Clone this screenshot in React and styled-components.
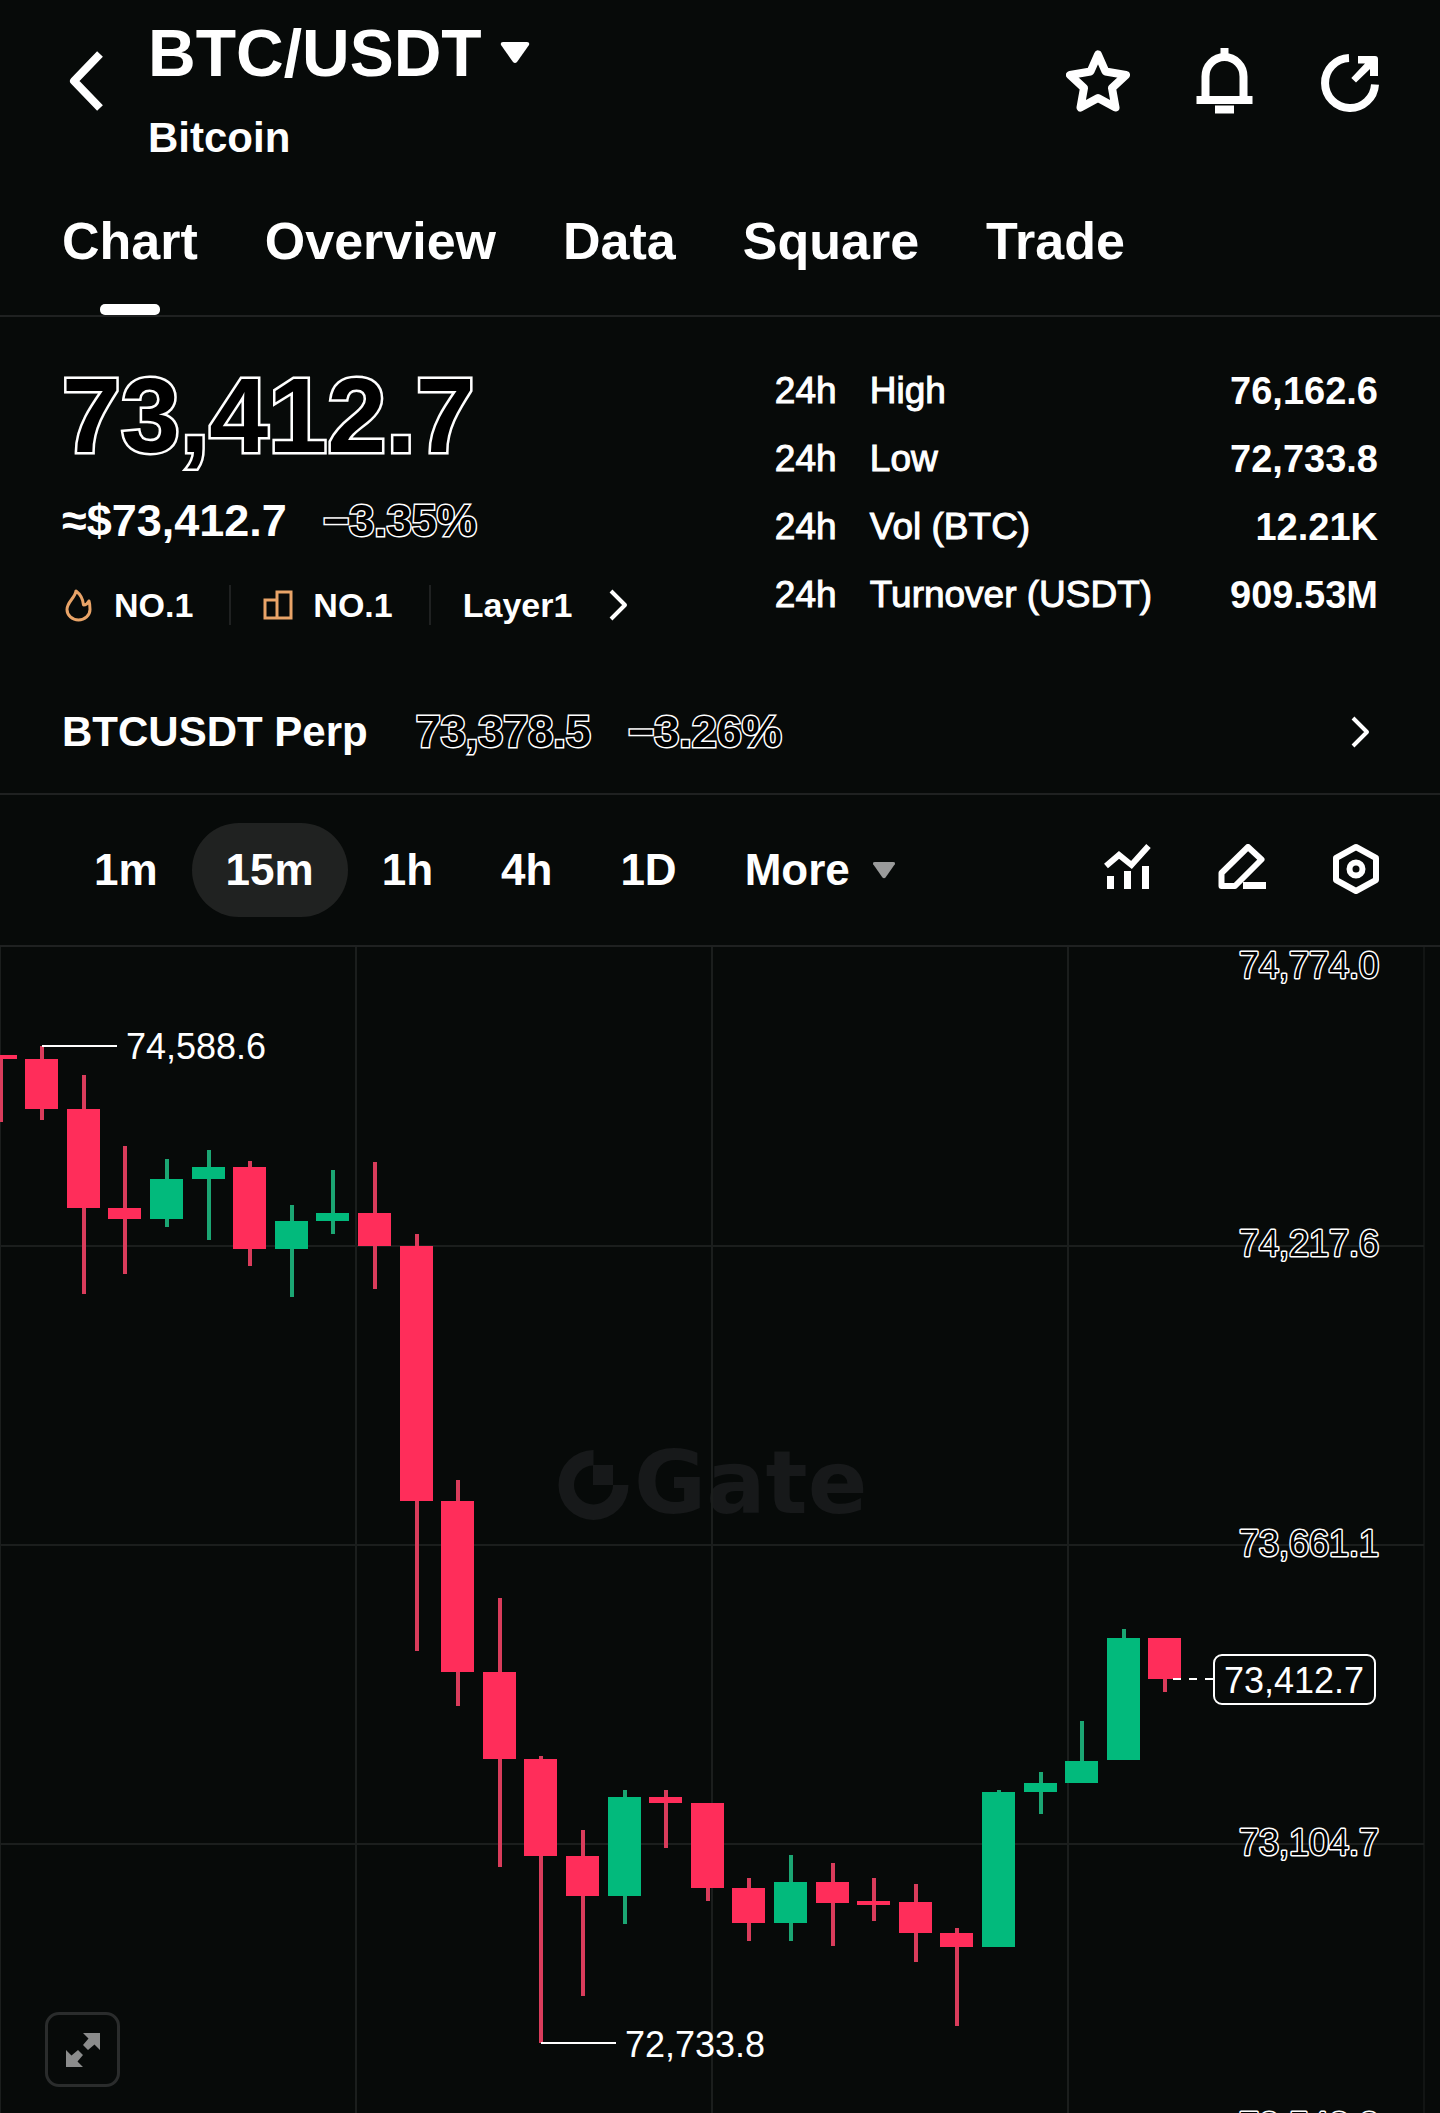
import React, { useState } from 'react';
import styled, { createGlobalStyle, css, ThemeProvider } from 'styled-components';

const theme = {
  colors: {
    background: '#070a09',
    text: '#ffffff',
    border: '#1f2121',
    grid: '#1b1e1d',
    gridEdge: '#121514',
    pill: '#202221',
    muted: '#9a9b9b',
    accent: '#e9a468',
    watermark: '#17191a',
    up: '#02ba7c',
    upWick: '#1ba673',
    down: '#ff2d5a',
    downWick: '#d93c5b',
  },
};

const GlobalStyle = createGlobalStyle`
  * {
    box-sizing: border-box;
  }

  body {
    margin: 0;
    background-color: ${theme.colors.background};
    color: ${theme.colors.text};
    font-family: 'Liberation Sans', Arial, sans-serif;
  }

  button {
    padding: 0;
    border: 0;
    background: none;
    color: inherit;
    font: inherit;
    cursor: pointer;
  }

  svg {
    display: block;
  }
`;

const outlined = css`
  color: #000;
  -webkit-text-stroke: 3px ${({ theme }) => theme.colors.text};
  paint-order: stroke fill;
`;

const Page = styled.main`
  overflow: hidden;
`;

/* Header */

const HeaderBar = styled.header`
  display: flex;
  align-items: center;
  padding: 0 58px 0 68px;
`;

const TitleBlock = styled.div`
  flex: 1;
  margin-left: 44px;
  padding-top: 16px;
`;

const PairButton = styled.button`
  display: flex;
  align-items: center;
  gap: 18px;
  font-size: 66px;
  font-weight: 700;
  line-height: 74px;
`;

const PairName = styled.h1`
  margin: 0;
  font: inherit;
`;

const CoinName = styled.p`
  margin: 24px 0 0;
  font-size: 42px;
  font-weight: 700;
  line-height: 48px;
`;

const IconGroup = styled.div`
  display: flex;
  align-items: center;
  gap: 62px;
`;

const TabBar = styled.nav`
  display: flex;
  gap: 67px;
  padding: 49px 62px 0;
  border-bottom: 2px solid ${({ theme }) => theme.colors.border};
`;

const TabButton = styled.button`
  display: flex;
  flex-direction: column;
  align-items: center;
  gap: 33px;
  font-size: 52px;
  font-weight: 700;
  line-height: 60px;

  &::after {
    content: '';
    width: 60px;
    height: 11px;
    border-radius: 5px;
    background-color: ${({ $active, theme }) => ($active ? theme.colors.text : 'transparent')};
  }
`;

/* Price summary */

const Summary = styled.section`
  display: grid;
  grid-template-columns: 13fr 11fr;
  padding: 40px 62px 42px;
`;

const PriceColumn = styled.div`
  padding-top: 6px;
`;

const LastPrice = styled.div`
  ${outlined}
  -webkit-text-stroke-width: 5px;
  font-size: 106px;
  font-weight: 700;
  line-height: 104px;
`;

const FiatRow = styled.div`
  display: flex;
  gap: 36px;
  margin-top: 28px;
  font-size: 45px;
  font-weight: 700;
  line-height: 52px;
`;

const Outlined = styled.span`
  ${outlined}
`;

const TagRow = styled.div`
  display: flex;
  align-items: center;
  margin-top: 38px;
  font-size: 34px;
  font-weight: 700;
  line-height: 40px;
`;

const Tag = styled.a`
  display: flex;
  align-items: center;
  gap: ${({ $gap }) => $gap || 20}px;
  color: inherit;
  text-decoration: none;

  & + & {
    margin-left: 36px;
    padding-left: 32px;
    border-left: 2px solid ${({ theme }) => theme.colors.border};
  }
`;

const Stats = styled.table`
  width: 100%;
  border-collapse: collapse;
  font-size: 37px;

  th,
  td {
    height: 68px;
    padding: 0;
    font-weight: 400;
    text-align: left;
    white-space: nowrap;
    -webkit-text-stroke: 1px ${({ theme }) => theme.colors.text};
  }

  td:first-child {
    width: 95px;
  }

  td:last-child {
    font-size: 38px;
    font-weight: 700;
    text-align: right;
    -webkit-text-stroke: 0;
  }
`;

const PerpLink = styled.a`
  display: flex;
  align-items: center;
  height: 124px;
  padding: 0 70px 0 62px;
  border-bottom: 2px solid ${({ theme }) => theme.colors.border};
  color: inherit;
  font-size: 45px;
  font-weight: 700;
  text-decoration: none;

  svg {
    margin-left: auto;
  }
`;

const PerpName = styled.span`
  margin-right: 48px;
  font-size: 42px;
`;

const PerpPrice = styled(Outlined)`
  margin-right: 37px;
`;

/* Toolbar */

const Toolbar = styled.div`
  display: flex;
  align-items: center;
  justify-content: space-between;
  height: 152px;
  padding: 0 58px 0 60px;
  border-bottom: 2px solid ${({ theme }) => theme.colors.border};
`;

const Intervals = styled.div`
  display: flex;
`;

const IntervalButton = styled.button`
  display: flex;
  align-items: center;
  gap: 22px;
  height: 94px;
  padding: 0 34px;
  border-radius: 47px;
  background-color: ${({ $active, theme }) => ($active ? theme.colors.pill : 'transparent')};
  font-size: 44px;
  font-weight: 700;
`;

/* Chart */

const ChartPanel = styled.section`
  position: relative;
`;

const ChartSvg = styled.svg`
  width: 100%;
  height: auto;
  overflow: visible;
  font-size: 36px;
`;

const GridLine = styled.line`
  stroke: ${({ $edge, theme }) => ($edge ? theme.colors.gridEdge : theme.colors.grid)};
  stroke-width: 2;
`;

const Watermark = styled.g`
  fill: ${({ theme }) => theme.colors.watermark};
  font-family: 'DejaVu Sans', sans-serif;
  font-size: 88px;
  font-weight: 700;
`;

const Wick = styled.line`
  stroke: ${({ $up, theme }) => ($up ? theme.colors.upWick : theme.colors.downWick)};
  stroke-width: 4;
`;

const Body = styled.rect`
  fill: ${({ $up, theme }) => ($up ? theme.colors.up : theme.colors.down)};
`;

const AxisLabel = styled.text`
  fill: #000;
  stroke: ${({ theme }) => theme.colors.text};
  stroke-width: 3;
  stroke-linejoin: round;
  paint-order: stroke fill;
`;

const Marker = styled.g`
  fill: ${({ theme }) => theme.colors.text};

  line,
  rect {
    fill: ${({ theme }) => theme.colors.background};
    stroke: ${({ theme }) => theme.colors.text};
    stroke-width: 2;
  }
`;

const ExpandButton = styled.button`
  position: absolute;
  left: 45px;
  bottom: 26px;
  display: grid;
  place-items: center;
  width: 75px;
  height: 75px;
  border: 3px solid #2a2c2c;
  border-radius: 14px;
  background-color: ${({ theme }) => theme.colors.background};
  color: #8b8c8c;
`;

const BackIcon = () => (
  <svg width="36" height="64" viewBox="0 0 36 64" fill="none" stroke="currentColor" strokeWidth="8" strokeLinejoin="round">
    <path d="M32 5L6 32L32 59" />
  </svg>
);

const CaretIcon = ({ width = 30, height = 22, color = 'currentColor' }) => (
  <svg width={width} height={height} viewBox="0 0 30 22" fill={color}>
    <path d="M3 0H27Q30 0 29 3L17 20Q15 22 13 20L1 3Q0 0 3 0Z" />
  </svg>
);

const ChevronIcon = () => (
  <svg width="20" height="32" viewBox="0 0 20 32" fill="none" stroke="currentColor" strokeWidth="4" strokeLinejoin="round">
    <path d="M3 2L17 16L3 30" />
  </svg>
);

const StarIcon = () => (
  <svg width="64" height="64" viewBox="0 0 64 64" fill="none" stroke="currentColor" strokeWidth="8" strokeLinejoin="round">
    <path d="M32 5.5L39.5 22.5L60 26L46 39L49.5 58.5L32 49L14.5 58.5L18 39L4 26L24.5 22.5Z" />
  </svg>
);

const BellIcon = () => (
  <svg width="64" height="66" viewBox="0 -1 64 66" fill="currentColor">
    <rect x="28.5" y="-1" width="8" height="8" />
    <path d="M13.5 50V27.5A19 19.5 0 0 1 51.5 27.5V50" fill="none" stroke="currentColor" strokeWidth="8" />
    <rect x="4.5" y="47" width="56" height="8" />
    <rect x="23" y="56.5" width="19" height="8" />
  </svg>
);

const ShareIcon = () => (
  <svg width="64" height="64" viewBox="0 0 64 64" fill="currentColor">
    <path d="M31 9A25 25 0 1 0 57 35.5" fill="none" stroke="currentColor" strokeWidth="8" />
    <path d="M40 7H57Q60 7 60 10V27H52V20L38 33.5L33.3 29L47 14.5H40Z" />
  </svg>
);

const FlameIcon = () => (
  <svg width="32" height="36" viewBox="0 0 32 36" fill="none" stroke={theme.colors.accent} strokeWidth="3" strokeLinejoin="round">
    <path d="M14 4C13 11 5 15 5 22.5A11.5 10.5 0 0 0 28 22.5C28 19 28 17 27 14C26 16 24 18 21.5 18C21 12 18 7 14 4Z" />
  </svg>
);

const PodiumIcon = () => (
  <svg width="30" height="30" viewBox="0 0 30 30" fill="none" stroke={theme.colors.accent} strokeWidth="3">
    <path d="M14 28H2V10H14M14 28V2H28V28Z" />
  </svg>
);

const IndicatorIcon = () => (
  <svg width="52" height="52" viewBox="0 0 52 52" fill="currentColor">
    <path d="M4 22L17 11L29.5 21L46.5 2" fill="none" stroke="currentColor" strokeWidth="6" />
    <rect x="5" y="32" width="7" height="13" />
    <rect x="22" y="27" width="7" height="18" />
    <rect x="40" y="22" width="7" height="23" />
  </svg>
);

const PencilIcon = () => (
  <svg width="52" height="52" viewBox="0 0 52 52" fill="none" stroke="currentColor" strokeWidth="6" strokeLinejoin="round">
    <path d="M5.5 42V29L32 3L45.5 15.5L19 42Z" />
    <path d="M27 41.5H50" strokeWidth="7" />
  </svg>
);

const SettingsIcon = () => (
  <svg width="52" height="52" viewBox="0 0 52 52" fill="none" stroke="currentColor" strokeWidth="6" strokeLinejoin="round">
    <path d="M26 3L46 14V36L26 47L6 36V14Z" />
    <circle cx="26" cy="25" r="6.5" />
  </svg>
);

const ExpandIcon = () => (
  <svg width="34" height="34" viewBox="0 0 34 34" fill="currentColor">
    <path d="M17 0H34V17L28.5 11.5L22 17L17 12L22.5 5.5Z" />
    <path d="M17 34H0V17L5.5 22.5L12 17L17 22L11.5 28.5Z" />
  </svg>
);

const tabs = ['Chart', 'Overview', 'Data', 'Square', 'Trade'];
const intervals = ['1m', '15m', '1h', '4h', '1D'];

const stats = [
  { label: 'High', value: '76,162.6' },
  { label: 'Low', value: '72,733.8' },
  { label: 'Vol (BTC)', value: '12.21K' },
  { label: 'Turnover (USDT)', value: '909.53M' },
];

const axis = [
  { label: '74,774.0', y: 31 },
  { label: '74,217.6', y: 309 },
  { label: '73,661.1', y: 609 },
  { label: '73,104.7', y: 908 },
  { label: '72,548.2', y: 1191 },
];

// [high, body top, body bottom, low, up] in chart units
const candles = [
  [108, 108, 112, 175, 0],
  [99, 112, 162, 173, 0],
  [128, 162, 261, 347, 0],
  [199, 261, 272, 327, 0],
  [212, 232, 272, 280, 1],
  [203, 220, 232, 293, 1],
  [214, 220, 302, 319, 0],
  [258, 274, 302, 350, 1],
  [223, 266, 274, 287, 1],
  [215, 266, 299, 342, 0],
  [287, 299, 554, 704, 0],
  [533, 554, 725, 759, 0],
  [651, 725, 812, 920, 0],
  [809, 812, 909, 1096, 0],
  [883, 909, 949, 1049, 0],
  [843, 850, 949, 977, 1],
  [843, 850, 856, 901, 0],
  [856, 856, 941, 954, 0],
  [931, 941, 976, 994, 0],
  [908, 935, 976, 994, 1],
  [916, 935, 956, 999, 0],
  [931, 954, 958, 974, 0],
  [937, 955, 986, 1015, 0],
  [981, 986, 1000, 1079, 0],
  [843, 845, 1000, 1000, 1],
  [825, 836, 845, 867, 1],
  [774, 814, 836, 836, 1],
  [682, 691, 813, 813, 1],
  [691, 691, 732, 745, 0],
];

const CANDLE_STEP = 41.6;
const CANDLE_WIDTH = 33;

const Header = () => (
  <HeaderBar>
    <button aria-label="Back"><BackIcon /></button>
    <TitleBlock>
      <PairButton>
        <PairName>BTC/USDT</PairName>
        <CaretIcon />
      </PairButton>
      <CoinName>Bitcoin</CoinName>
    </TitleBlock>
    <IconGroup>
      <button aria-label="Add to favorites"><StarIcon /></button>
      <button aria-label="Price alerts"><BellIcon /></button>
      <button aria-label="Share"><ShareIcon /></button>
    </IconGroup>
  </HeaderBar>
);

const PriceSummary = () => (
  <Summary>
    <PriceColumn>
      <LastPrice>73,412.7</LastPrice>
      <FiatRow>
        <span>≈$73,412.7</span>
        <Outlined>−3.35%</Outlined>
      </FiatRow>
      <TagRow>
        <Tag href="#hot"><FlameIcon />NO.1</Tag>
        <Tag href="#rank"><PodiumIcon />NO.1</Tag>
        <Tag href="#layer1" $gap={36}>Layer1<ChevronIcon /></Tag>
      </TagRow>
    </PriceColumn>
    <Stats>
      <tbody>
        {stats.map(({ label, value }) => (
          <tr key={label}>
            <td>24h</td>
            <th scope="row">{label}</th>
            <td>{value}</td>
          </tr>
        ))}
      </tbody>
    </Stats>
  </Summary>
);

const CandleChart = () => (
  <ChartPanel>
    <ChartSvg viewBox="0 0 1440 1166" role="img" aria-label="BTC/USDT candlestick chart">
      <Watermark>
        <path d="M593.5 503A35 35 0 1 0 628.5 538H613A19.5 19.5 0 1 1 593.5 518.5Z" />
        <rect x="593" y="518" width="20" height="20" />
        <text x="634" y="566">Gate</text>
      </Watermark>
      {[0, 356, 712, 1068, 1424].map((x) => (
        <GridLine key={x} $edge={x === 1424} x1={x} x2={x} y1="0" y2="1166" />
      ))}
      {[299, 598, 897].map((y) => (
        <GridLine key={y} x1="0" x2="1424" y1={y} y2={y} />
      ))}
      {candles.map(([high, top, bottom, low, up], i) => {
        const x = Math.round(i * CANDLE_STEP + 0.5);
        return (
          <g key={i}>
            <Wick $up={up} x1={x} x2={x} y1={high} y2={low} />
            <Body $up={up} x={x - 17} y={top} width={CANDLE_WIDTH} height={bottom - top} />
          </g>
        );
      })}
      <Marker>
        <line x1="42" x2="117" y1="99" y2="99" />
        <text x="126" y="112">74,588.6</text>
      </Marker>
      <Marker>
        <line x1="541" x2="616" y1="1096" y2="1096" />
        <text x="625" y="1110">72,733.8</text>
      </Marker>
      {axis.map(({ label, y }) => (
        <AxisLabel key={label} x="1239" y={y}>{label}</AxisLabel>
      ))}
      <Marker>
        <line x1="1173" x2="1213" y1="732" y2="732" strokeDasharray="8 8" />
        <rect x="1214" y="708" width="161" height="49" rx="8" />
        <text x="1224" y="746">73,412.7</text>
      </Marker>
    </ChartSvg>
    <ExpandButton aria-label="Full screen"><ExpandIcon /></ExpandButton>
  </ChartPanel>
);

const App = () => {
  const [tab, setTab] = useState('Chart');
  const [interval, setInterval] = useState('15m');

  return (
    <ThemeProvider theme={theme}>
      <GlobalStyle />
      <Page>
        <Header />
        <TabBar>
          {tabs.map((name) => (
            <TabButton key={name} $active={name === tab} onClick={() => setTab(name)}>
              {name}
            </TabButton>
          ))}
        </TabBar>
        <PriceSummary />
        <PerpLink href="#perp">
          <PerpName>BTCUSDT Perp</PerpName>
          <PerpPrice>73,378.5</PerpPrice>
          <Outlined>−3.26%</Outlined>
          <ChevronIcon />
        </PerpLink>
        <Toolbar>
          <Intervals>
            {intervals.map((name) => (
              <IntervalButton key={name} $active={name === interval} onClick={() => setInterval(name)}>
                {name}
              </IntervalButton>
            ))}
            <IntervalButton>
              More
              <CaretIcon width={24} height={17} color={theme.colors.muted} />
            </IntervalButton>
          </Intervals>
          <IconGroup>
            <button aria-label="Indicators"><IndicatorIcon /></button>
            <button aria-label="Drawing tools"><PencilIcon /></button>
            <button aria-label="Chart settings"><SettingsIcon /></button>
          </IconGroup>
        </Toolbar>
        <CandleChart />
      </Page>
    </ThemeProvider>
  );
};

export default App;
